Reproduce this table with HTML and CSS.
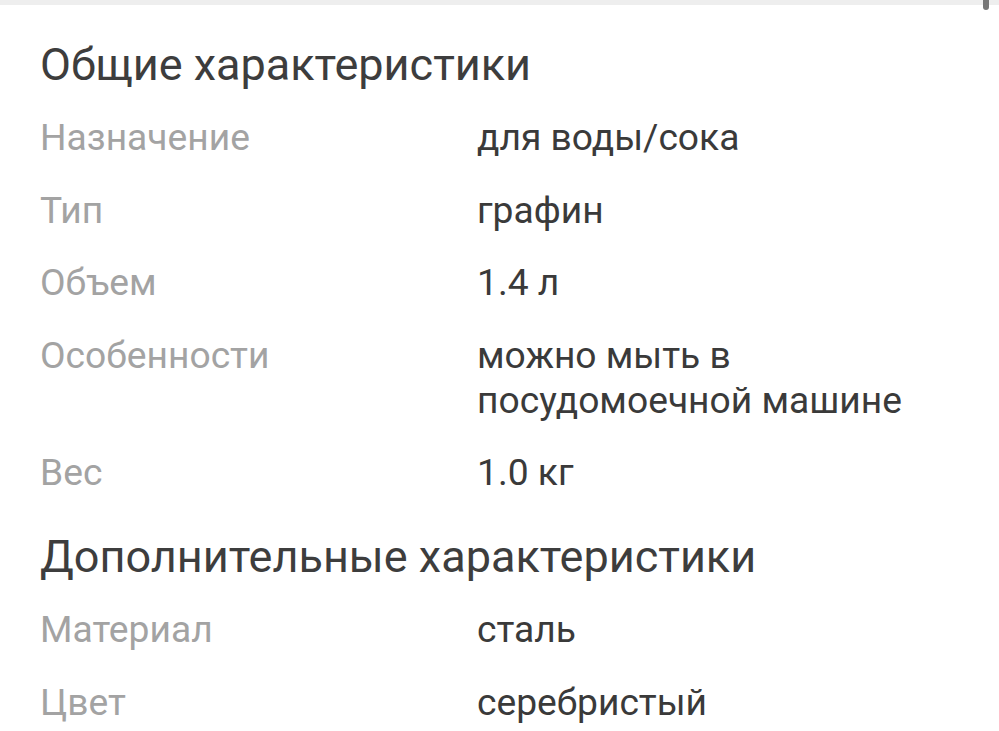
FILE: index.html
```html
<!DOCTYPE html>
<html lang="ru">
<head>
<meta charset="utf-8">
<link rel="stylesheet" href="styles.css">
</head>
<body>
<div class="topbar"></div>
<div class="scroll-thumb"></div>
<main class="specs">
  <section class="group">
    <h2 class="group-title">Общие характеристики</h2>
    <dl class="rows">
      <div class="row"><dt>Назначение</dt><dd>для воды/сока</dd></div>
      <div class="row"><dt>Тип</dt><dd>графин</dd></div>
      <div class="row"><dt>Объем</dt><dd>1.4 л</dd></div>
      <div class="row"><dt>Особенности</dt><dd>можно мыть в<br>посудомоечной машине</dd></div>
      <div class="row"><dt>Вес</dt><dd>1.0 кг</dd></div>
    </dl>
  </section>
  <section class="group">
    <h2 class="group-title">Дополнительные характеристики</h2>
    <dl class="rows">
      <div class="row"><dt>Материал</dt><dd>сталь</dd></div>
      <div class="row"><dt>Цвет</dt><dd>серебристый</dd></div>
    </dl>
  </section>
</main>
</body>
</html>
```
FILE: styles.css
```css
html, body {
  margin: 0;
  padding: 0;
  background: #ffffff;
  overflow: hidden;
}
body {
  font-family: Roboto, "Noto Sans", sans-serif;
  position: relative;
  width: 999px;
  height: 731px;
}
.topbar {
  height: 5px;
  background: #eeeeee;
}
.scroll-thumb {
  position: absolute;
  top: 0;
  left: 983px;
  width: 6px;
  height: 10px;
  background: #767676;
  border-radius: 0 0 3px 3px;
}
.specs {
  padding: 34px 0 0 40px;
  display: flex;
  flex-direction: column;
  gap: 36px;
}
.group-title {
  margin: 0 0 24px 0;
  font-size: 45px;
  line-height: 52px;
  font-weight: 400;
  color: #3d3d3d;
}
.rows {
  margin: 0;
  display: flex;
  flex-direction: column;
  gap: 27.5px;
}
.row {
  display: grid;
  grid-template-columns: 437px 1fr;
  font-size: 37.2px;
  line-height: 45px;
}
.row dt {
  color: #a3a3a3;
}
.row dd {
  margin: 0;
  color: #3a3a3a;
}
```
